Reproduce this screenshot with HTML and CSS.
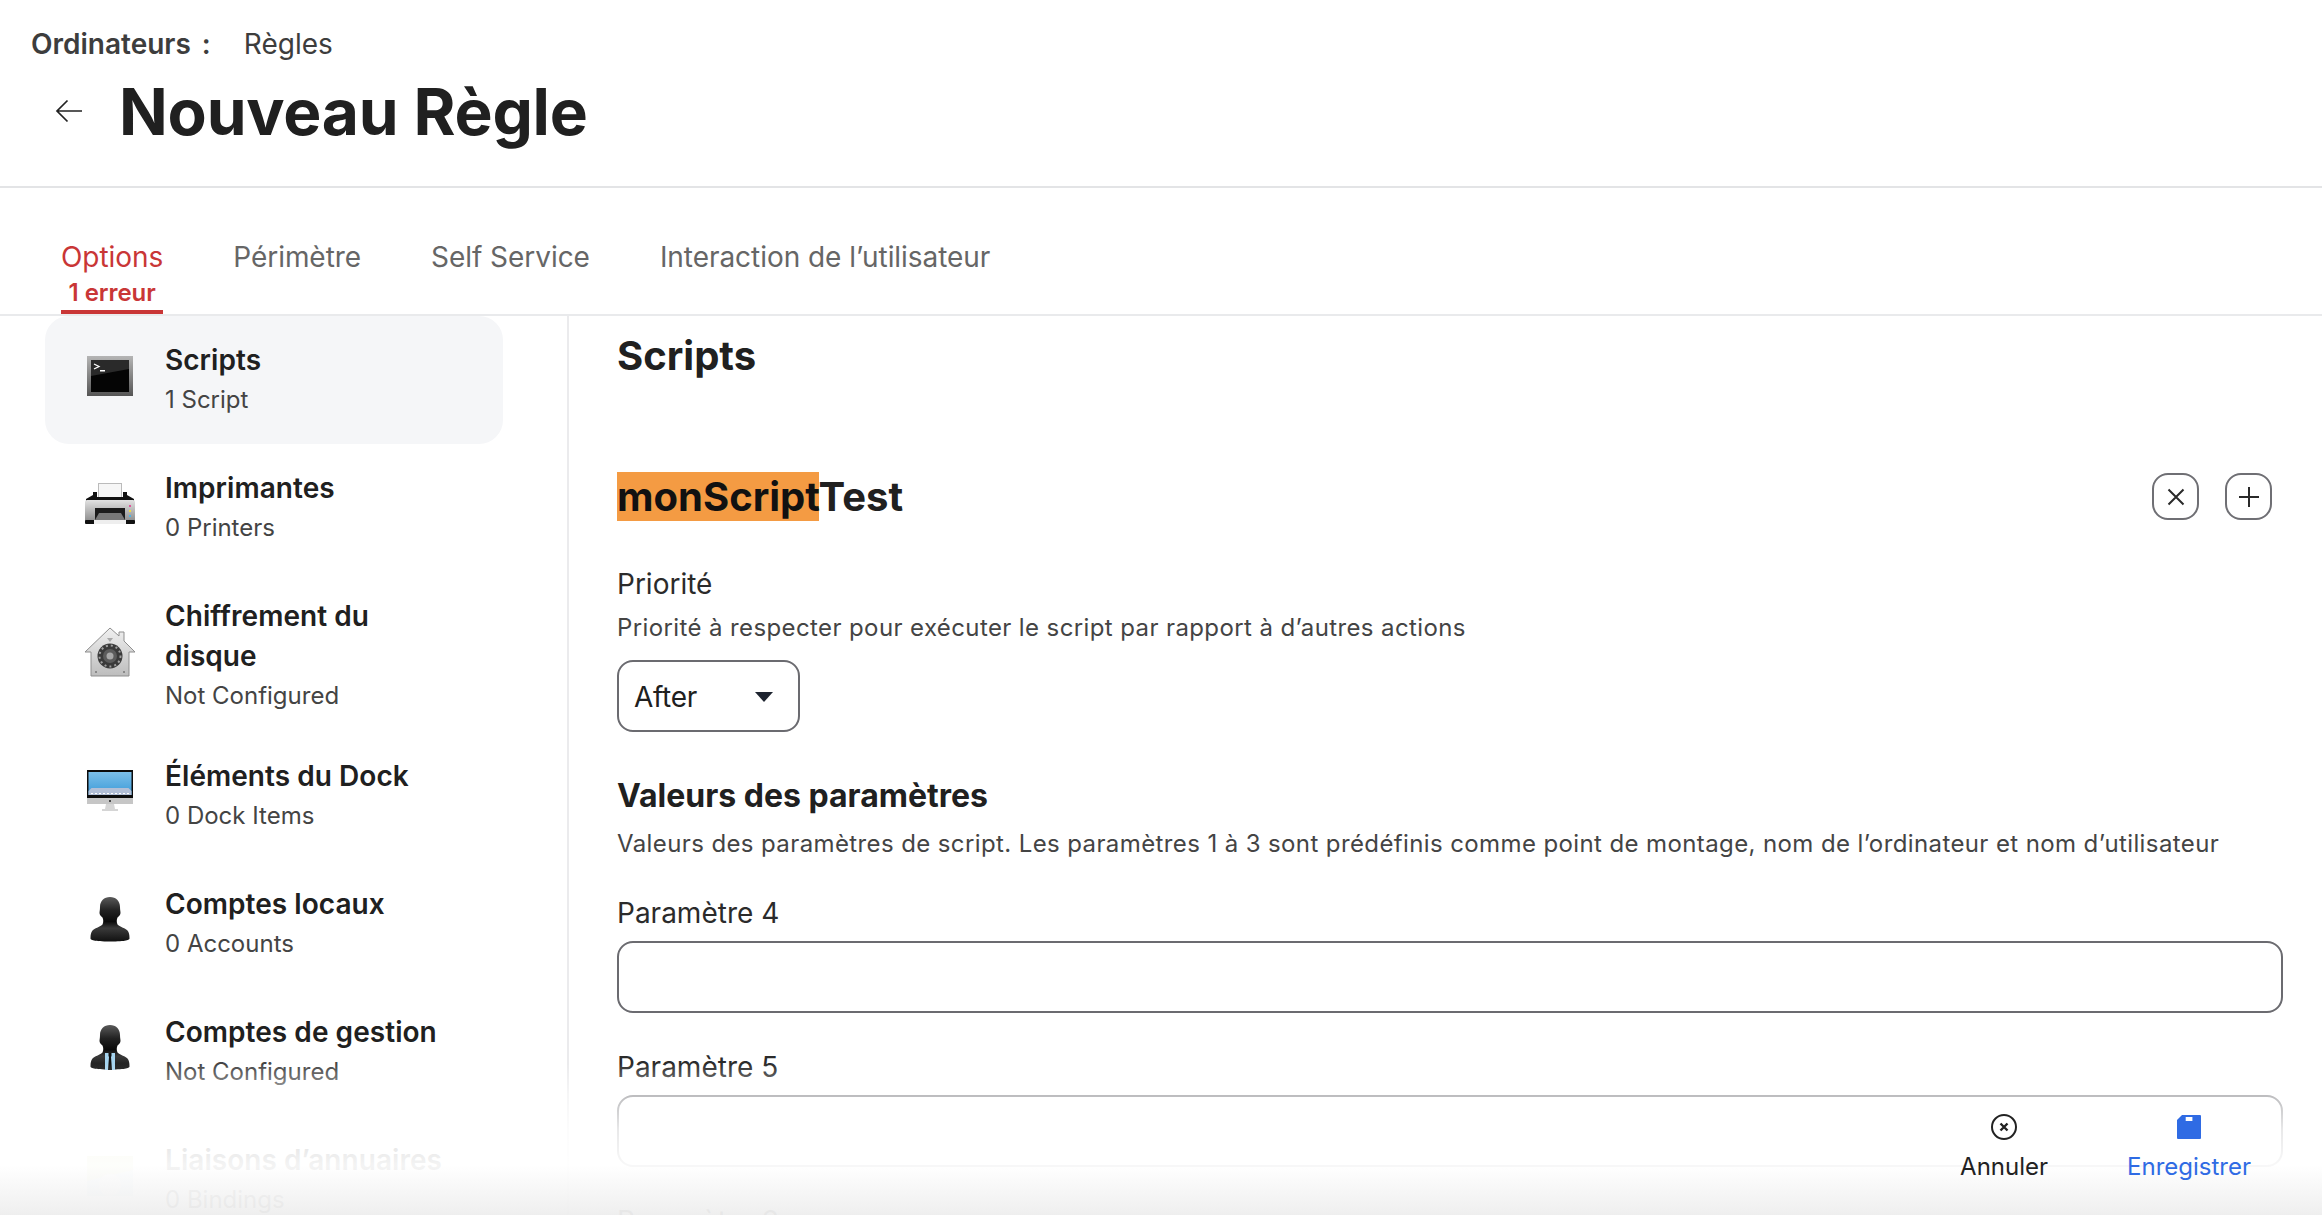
FILE: index.html
```html
<!DOCTYPE html>
<html lang="fr">
<head>
  <meta charset="UTF-8" />
  <title>Nouveau Règle</title>
  <link rel="stylesheet" href="styles.css">
</head>
<body>
<div class="page">

  <header class="top">
    <div class="crumbs"><strong>Ordinateurs</strong><span class="colon">:</span><span>Règles</span></div>
    <div class="title-row">
      <svg class="back" width="28" height="24" viewBox="0 0 28 24" fill="none" stroke="#222" stroke-width="1.700"><path d="M27 12H2M12.500 1.500 2 12 12.500 22.500"/></svg>
      <h1>Nouveau Règle</h1>
    </div>
  </header>

  <nav class="tabs">
    <a class="tab active">Options<small>1 erreur</small></a>
    <a class="tab">Périmètre</a>
    <a class="tab">Self Service</a>
    <a class="tab">Interaction de l’utilisateur</a>
  </nav>

  <div class="main">
    <aside class="side">
      <div class="item selected">
        <svg class="icon" width="50" height="50" viewBox="0 0 50 50">
          <defs><linearGradient id="tf" x1="0" y1="0" x2="0" y2="1"><stop offset="0" stop-color="#b5b5b5"/><stop offset="1" stop-color="#555"/></linearGradient></defs>
          <rect x="2" y="5" width="46" height="40" fill="url(#tf)"/>
          <rect x="6" y="9" width="38" height="32" fill="#050505"/>
          <path d="M6 9h38v9L6 25z" fill="#2a2a2a"/>
          <path d="M9 13l5 2.500-5 2.500" fill="none" stroke="#fff" stroke-width="1.300"/>
          <rect x="15" y="19" width="5" height="1.500" fill="#fff"/>
        </svg>
        <div class="item-text"><b>Scripts</b><span>1 Script</span></div>
      </div>

      <div class="item">
        <svg class="icon" width="50" height="50" viewBox="0 0 50 50">
          <defs><linearGradient id="pb" x1="0" y1="0" x2="0" y2="1"><stop offset="0" stop-color="#e2e2e2"/><stop offset="1" stop-color="#8a8a8a"/></linearGradient></defs>
          <rect x="13.500" y="4.500" width="23" height="20" fill="#f6f6f6" stroke="#bbb"/>
          <path d="M8 13h4v5h26v-5h4v3l7 4v3H1v-3l7-4z" fill="#111"/>
          <rect x="0" y="21" width="50" height="22" rx="2" fill="url(#pb)"/>
          <rect x="0" y="41" width="50" height="4" rx="1" fill="#111"/>
          <path d="M10 29h30v12H10z" fill="#1b1b1b"/>
          <path d="M10 41l4-7h22l4 7z" fill="#777"/>
          <path d="M9 41h32v4H9z" fill="#eee"/>
          <rect x="44" y="26" width="2" height="2" fill="#e0559b"/>
          <rect x="44" y="31" width="2" height="2" fill="#f1dc45"/>
          <rect x="44" y="36" width="2" height="2" fill="#4eb5e6"/>
        </svg>
        <div class="item-text"><b>Imprimantes</b><span>0 Printers</span></div>
      </div>

      <div class="item tall">
        <svg class="icon" width="50" height="50" viewBox="0 0 50 50">
          <defs><linearGradient id="hs" x1="0" y1="0" x2="0" y2="1"><stop offset="0" stop-color="#f0f0f0"/><stop offset="1" stop-color="#bdbdbd"/></linearGradient></defs>
          <path d="M25 1l9 8V5h5v9l11 11h-6v24H6V25H0z" fill="url(#hs)" stroke="#8f8f8f"/>
          <circle cx="25" cy="29" r="12.500" fill="#3a3a3a"/>
          <circle cx="25" cy="29" r="10.500" fill="none" stroke="#a0a0a0" stroke-width="2" stroke-dasharray="2 3"/>
          <circle cx="25" cy="29" r="7" fill="#5c5c5c"/>
          <circle cx="25" cy="29" r="3.500" fill="#a8a8a8"/>
          <path d="M22 11h6l-3 4z" fill="#a8a8a8"/>
          <circle cx="11" cy="45" r="1" fill="#777"/><circle cx="39" cy="45" r="1" fill="#777"/>
        </svg>
        <div class="item-text"><b>Chiffrement du disque</b><span>Not Configured</span></div>
      </div>

      <div class="item">
        <svg class="icon" width="50" height="50" viewBox="0 0 50 50">
          <defs><linearGradient id="sc" x1="0" y1="0" x2="0" y2="1"><stop offset="0" stop-color="#7cc0ea"/><stop offset="1" stop-color="#3b9ad8"/></linearGradient></defs>
          <rect x="2" y="3" width="46" height="28" fill="#0c0c0c"/>
          <rect x="3.500" y="5" width="43" height="23" fill="url(#sc)"/>
          <path d="M3.500 24l3-3h37l3 3v4h-43z" fill="#b2bfd6"/>
          <path d="M6 26.500h38" stroke="#fff" stroke-width="1.200" stroke-dasharray="2 2"/>
          <rect x="2" y="31" width="46" height="6" fill="#c6c6c6"/>
          <circle cx="25" cy="34" r="1" fill="#222"/>
          <path d="M21 37h8l1 5h3v2H17v-2h3z" fill="#d5d5d5"/>
        </svg>
        <div class="item-text"><b>Éléments du Dock</b><span>0 Dock Items</span></div>
      </div>

      <div class="item">
        <svg class="icon" width="50" height="50" viewBox="0 0 50 50">
          <defs><linearGradient id="pr" x1="0" y1="0" x2="0" y2="1"><stop offset="0" stop-color="#5a5a5a"/><stop offset=".3" stop-color="#222"/><stop offset=".55" stop-color="#0a0a0a"/><stop offset=".7" stop-color="#3a3a3a"/><stop offset="1" stop-color="#111"/></linearGradient></defs>
          <path d="M25 2c6 0 10 4 10 10 0 3 .5 4 .5 6 0 2-1.500 3-3 4.500-1 2-1 5 0 7 3 3 8 3.500 10 6 1.500 2 2 4 2 8 0 1.500-3 3-19.500 3s-19.500-1.500-19.500-3c0-4 .5-6 2-8 2-2.500 7-3 10-6 1-2 1-5 0-7-1.500-1.500-3-2.500-3-4.500 0-2 .5-3 .5-6C15 6 19 2 25 2z" fill="url(#pr)"/>
        </svg>
        <div class="item-text"><b>Comptes locaux</b><span>0 Accounts</span></div>
      </div>

      <div class="item">
        <svg class="icon" width="50" height="50" viewBox="0 0 50 50">
          <defs><linearGradient id="ps" x1="0" y1="0" x2="0" y2="1"><stop offset="0" stop-color="#5a5a5a"/><stop offset=".3" stop-color="#222"/><stop offset=".55" stop-color="#0a0a0a"/><stop offset=".7" stop-color="#3a3a3a"/><stop offset="1" stop-color="#111"/></linearGradient></defs>
          <path d="M25 2c6 0 10 4 10 10 0 3 .5 4 .5 6 0 2-1.500 3-3 4.500-1 2-1 5 0 7 3 3 8 3.500 10 6 1.500 2 2 4 2 8 0 1.500-3 3-19.500 3s-19.500-1.500-19.500-3c0-4 .5-6 2-8 2-2.500 7-3 10-6 1-2 1-5 0-7-1.500-1.500-3-2.500-3-4.500 0-2 .5-3 .5-6C15 6 19 2 25 2z" fill="url(#ps)"/>
          <path d="M20 30h10v17H20z" fill="#a5d4ef"/>
          <path d="M23.500 30h3v3l-.5 1 1 13h-4l1-13-.5-1z" fill="#111"/>
        </svg>
        <div class="item-text"><b>Comptes de gestion</b><span>Not Configured</span></div>
      </div>

      <div class="item">
        <svg class="icon" width="50" height="50" viewBox="0 0 50 50">
          <rect x="2" y="5" width="46" height="40" fill="#cfe4ee"/>
          <path d="M2 5h46v14L2 30z" fill="#dfe6b4"/>
          <circle cx="25" cy="34" r="11" fill="#ededed"/>
        </svg>
        <div class="item-text"><b>Liaisons d’annuaires</b><span>0 Bindings</span></div>
      </div>
    </aside>

    <section class="content">
      <h2>Scripts</h2>

      <div class="script-head">
        <h3><mark>monScript</mark>Test</h3>
        <div class="round-btns">
          <button class="round-btn"><svg width="18" height="18" viewBox="0 0 18 18" fill="none" stroke="#2a2a2a" stroke-width="2"><path d="M1.500 1.500l15 15M16.500 1.500l-15 15"/></svg></button>
          <button class="round-btn"><svg width="20" height="20" viewBox="0 0 20 20" fill="none" stroke="#2a2a2a" stroke-width="2"><path d="M10 0v20M0 10h20"/></svg></button>
        </div>
      </div>

      <label class="lbl prio">Priorité</label>
      <p class="hint">Priorité à respecter pour exécuter le script par rapport à d’autres actions</p>
      <div class="select">After<i class="caret"></i></div>

      <h4>Valeurs des paramètres</h4>
      <p class="hint tight">Valeurs des paramètres de script. Les paramètres 1 à 3 sont prédéfinis comme point de montage, nom de l’ordinateur et nom d’utilisateur</p>

      <div class="field first"><label class="lbl">Paramètre 4</label><input class="inp" type="text"></div>
      <div class="field"><label class="lbl">Paramètre 5</label><input class="inp" type="text"></div>
      <div class="field"><label class="lbl">Paramètre 6</label><input class="inp" type="text"></div>
    </section>
  </div>

  <footer class="actions">
    <a class="action">
      <svg width="28" height="28" viewBox="0 0 28 28" fill="none" stroke="#222" stroke-width="2"><circle cx="14" cy="14" r="12"/><path d="M10.500 10.500l7 7M17.500 10.500l-7 7" stroke-width="2.400"/></svg>
      Annuler
    </a>
    <a class="action save">
      <svg width="28" height="28" viewBox="0 0 28 28"><path d="M7 2h18a1 1 0 0 1 1 1v22a1 1 0 0 1-1 1H3a1 1 0 0 1-1-1V7z" fill="#2f6be4"/><rect x="10.700" y="4" width="6.700" height="4" fill="#fff"/></svg>
      Enregistrer
    </a>
  </footer>

</div>
</body>
</html>
```

FILE: styles.css
```css
* { box-sizing: border-box; }
html, body { margin: 0; padding: 0; height: 100%; }
body { font-family: Inter, "Noto Sans", sans-serif; background: #fff; color: #222; }
.page { position: relative; height: 100vh; overflow: hidden; display: flex; flex-direction: column; }

/* top */
.top { height: 188px; padding: 24px 31px 0; border-bottom: 2px solid #e3e4e6; }
.crumbs { display: flex; font-size: 28px; line-height: 40px; color: #3d3d3d; }
.crumbs strong { font-weight: 600; }
.colon { font-weight: 600; margin: 0 33px 0 11px; }
.title-row { display: flex; align-items: center; margin-top: 8px; }
.back { margin: 0 36px 3px 24px; }
h1 { margin: 0; font-size: 64px; line-height: 80px; font-weight: 700; color: #202020; letter-spacing: -.2px; }

/* tabs */
.tabs { display: flex; gap: 70px; height: 128px; padding: 49px 0 0 61px; border-bottom: 2px solid #e9eaec; }
.tab { font-size: 28px; line-height: 40px; color: #666; display: block; letter-spacing: -.05px; }
.tab small { display: block; font-size: 24px; line-height: 31px; font-weight: 600; text-align: center; }
.tab.active { color: #c93636; border-bottom: 4px solid #c93636; height: 77px; }

/* layout */
.main { flex: 1; display: flex; min-height: 0; }
.side { width: 569px; flex: none; padding: 0 64px 0 45px; border-right: 2px solid #ebebed; }
.item { display: flex; align-items: center; gap: 30px; padding: 24px 40px; border-radius: 24px; min-height: 128px; }
.item.selected { background: #f5f6f8; }
.item.tall { padding-bottom: 16px; }
.icon { flex: none; margin-bottom: 8px; }
.item-text b, .item-text span { display: block; line-height: 40px; }
.item-text b { font-size: 28px; font-weight: 600; color: #202020; letter-spacing: .05px; }
.item-text span { font-size: 24px; color: #444; }

/* content */
.content { flex: 1; min-width: 0; padding: 16px 39px 0 48px; }
h2 { margin: 0; font-size: 40px; line-height: 48px; font-weight: 700; color: #202020; }
.script-head { display: flex; justify-content: space-between; margin-top: 93px; padding-right: 11px; }
h3 { margin: 0; font-size: 40px; line-height: 47px; font-weight: 700; color: #202020; }
mark { background: #f49b43; color: #111; }
.round-btns { display: flex; gap: 26px; }
.round-btn { width: 47px; height: 47px; padding: 0; background: #fff; border: 2px solid #6f6f74; border-radius: 16px; display: flex; align-items: center; justify-content: center; }
.lbl { display: block; font-size: 28px; line-height: 40px; color: #2b2b2b; }
.prio { margin-top: 44px; }
.hint { margin: 6px 0 0; font-size: 24px; line-height: 36px; color: #444; letter-spacing: .39px; }
.hint.tight { margin-top: 8px; }
.select { width: 183px; height: 72px; margin-top: 14px; padding: 2px 17px 0 15px; display: flex; align-items: center; justify-content: space-between; font-size: 28px; letter-spacing: -.3px; border: 2px solid #6b6b70; border-radius: 16px; color: #202020; }
.caret { width: 0; height: 0; border-left: 9px solid transparent; border-right: 9px solid transparent; border-top: 10px solid #1e2430; margin-right: 8px; }
h4 { margin: 42px 0 0; font-size: 32px; line-height: 44px; font-weight: 700; color: #202020; }
.field { margin-top: 34px; }
.field.first { margin-top: 31px; }
.inp { display: block; width: 100%; height: 72px; margin-top: 8px; border: 2px solid #6b6b70; border-radius: 16px; background: #fff; }

.actions { position: absolute; left: 0; right: 0; bottom: 0; height: 185px; display: flex; justify-content: flex-end; align-items: flex-end; gap: 79px; padding: 0 71px 33px 0; background: linear-gradient(to bottom, rgba(255,255,255,0) 18%, rgba(255,255,255,.55) 35%, rgba(255,255,255,.85) 54%, rgba(255,255,255,.95) 73%, rgba(238,238,238,.96) 100%); }
.action { display: flex; flex-direction: column; align-items: center; gap: 11px; font-size: 24px; line-height: 30px; color: #222; }
.action.save { color: #2f6be4; }
```
